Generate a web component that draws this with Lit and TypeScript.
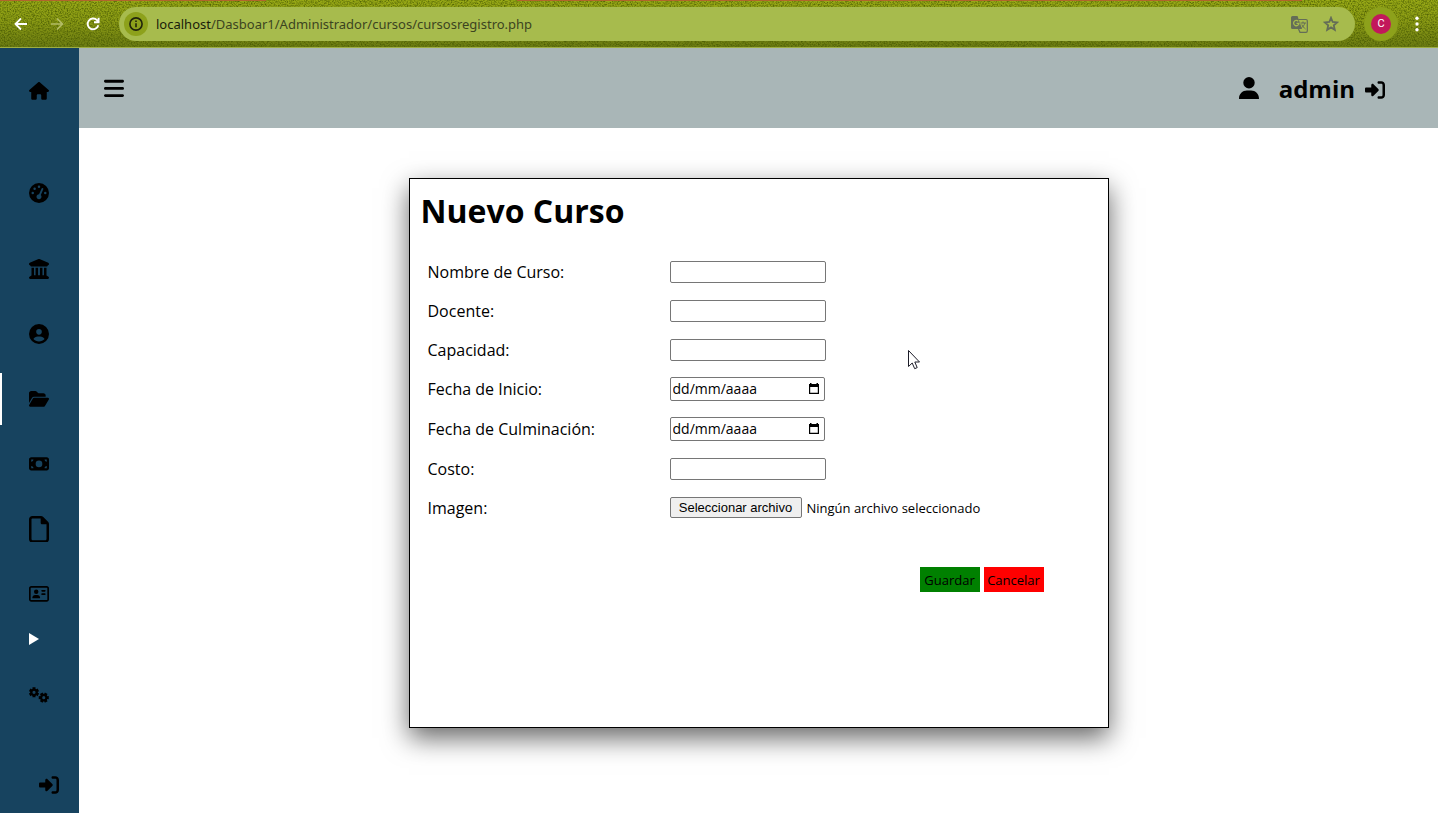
import { LitElement, html, svg, css } from "lit";
import { customElement, property, state, query } from "lit/decorators.js";
import { classMap } from "lit/directives/class-map.js";

interface Glyph {
  w: number;
  h: number;
  d: string;
}

// One cog: six teeth around a ring with a hole in the middle.
function cog(cx: number, cy: number, turn: number): string {
  const point = (r: number, deg: number) => {
    const a = ((deg + turn) * Math.PI) / 180;
    return `${(cx + r * Math.cos(a)).toFixed(1)} ${(cy + r * Math.sin(a)).toFixed(1)}`;
  };
  let d = "";
  for (let i = 0; i < 6; i++) {
    const a = i * 60;
    d += `${i ? "L" : "M"}${point(124, a - 22)}L${point(168, a - 17)}L${point(168, a + 17)}L${point(124, a + 22)}`;
  }
  return `${d}ZM${cx - 50} ${cy}a50 50 0 1 0 100 0a50 50 0 1 0 -100 0Z`;
}

const GLYPHS: Record<string, Glyph> = {
  home: { w: 576, h: 512, d: "M575.8 255.5c0 18-15 32.1-32 32.1h-32l.7 160.2c0 2.7-.2 5.4-.5 8.1V472c0 22.1-17.9 40-40 40H456c-1.1 0-2.2 0-3.3-.1c-1.4 .1-2.8 .1-4.2 .1H416 392c-22.1 0-40-17.9-40-40V448 384c0-17.7-14.3-32-32-32H256c-17.7 0-32 14.3-32 32v64 24c0 22.1-17.9 40-40 40H160 128.1c-1.5 0-3-.1-4.5-.2c-1.2 .1-2.4 .2-3.6 .2H104c-22.1 0-40-17.9-40-40V360c0-.9 0-1.9 .1-2.8V287.6H32c-18 0-32-14-32-32.1c0-9 3-17 10-24L266.4 8c7-7 15-8 22-8s15 2 21 7L564.8 231.5c8 7 12 15 11 24z" },
  gauge: { w: 512, h: 512, d: "M0 256a256 256 0 1 1 512 0A256 256 0 1 1 0 256zM288 96a32 32 0 1 0 -64 0 32 32 0 1 0 64 0zM256 416c35.3 0 64-28.7 64-64c0-17.4-6.9-33.1-18.1-44.6L366 161.7c5.3-12.1-.2-26.3-12.3-31.6s-26.3 .2-31.6 12.3L257.9 288c-.6 0-1.3 0-1.9 0c-35.3 0-64 28.7-64 64s28.7 64 64 64zM176 144a32 32 0 1 0 -64 0 32 32 0 1 0 64 0zM96 288a32 32 0 1 0 0-64 32 32 0 1 0 0 64zm352-32a32 32 0 1 0 -64 0 32 32 0 1 0 64 0z" },
  columns: { w: 512, h: 512, d: "M243.4 2.6l-224 96c-14 6-21.8 21-18.7 35.8S16.8 160 32 160v8c0 13.3 10.7 24 24 24H456c13.3 0 24-10.7 24-24v-8c15.2 0 28.3-10.7 31.3-25.6s-4.8-29.9-18.7-35.8l-224-96c-8-3.4-17.2-3.4-25.2 0zM128 224H64V420.3c-.6 .3-1.2 .7-1.8 1.1l-48 32c-11.7 7.8-17 22.4-12.9 35.9S17.9 512 32 512H480c14.1 0 26.5-9.2 30.6-22.7s-1.1-28.1-12.9-35.9l-48-32c-.6-.4-1.2-.7-1.8-1.1V224H384V416H344V224H280V416H232V224H168V416H128V224z" },
  userCircle: { w: 512, h: 512, d: "M399 384.2C376.9 345.8 335.4 320 288 320H224c-47.4 0-88.9 25.8-111 64.2c35.2 39.2 86.2 63.8 143 63.8s107.8-24.7 143-63.8zM0 256a256 256 0 1 1 512 0A256 256 0 1 1 0 256zm256 16a72 72 0 1 0 0-144 72 72 0 1 0 0 144z" },
  folder: { w: 576, h: 512, d: "M88.7 223.8L0 375.8V96C0 60.7 28.7 32 64 32H181.5c17 0 33.3 6.7 45.3 18.7l26.5 26.5c12 12 28.3 18.7 45.3 18.7H416c35.3 0 64 28.7 64 64v32H144c-22.8 0-43.8 12.1-55.3 31.8zm27.6 16.1C122.1 230 132.6 224 144 224H544c11.5 0 22 6.1 27.7 16.1s5.7 22.2-.1 32.1l-112 192C453.9 474 443.4 480 432 480H32c-11.5 0-22-6.1-27.7-16.1s-5.7-22.2 .1-32.1l112-192z" },
  money: { w: 576, h: 512, d: "M64 64C28.7 64 0 92.7 0 128V384c0 35.3 28.7 64 64 64H512c35.3 0 64-28.7 64-64V128c0-35.3-28.7-64-64-64H64zm64 320H64V320c35.3 0 64 28.7 64 64zM64 192V128h64c0 35.3-28.7 64-64 64zM448 384c0-35.3 28.7-64 64-64v64H448zm64-192c-35.3 0-64-28.7-64-64h64v64zM288 160a96 96 0 1 1 0 192 96 96 0 1 1 0-192z" },
  file: { w: 384, h: 512, d: "M320 464c8.8 0 16-7.2 16-16V160H256c-17.7 0-32-14.3-32-32V48H64c-8.8 0-16 7.2-16 16V448c0 8.8 7.2 16 16 16H320zM0 64C0 28.7 28.7 0 64 0H229.5c17 0 33.3 6.7 45.3 18.7l90.5 90.5c12 12 18.7 28.3 18.7 45.3V448c0 35.3-28.7 64-64 64H64c-35.3 0-64-28.7-64-64V64z" },
  card: { w: 576, h: 512, d: "M512 80c8.8 0 16 7.2 16 16V416c0 8.8-7.2 16-16 16H64c-8.8 0-16-7.2-16-16V96c0-8.8 7.2-16 16-16H512zM64 32C28.7 32 0 60.7 0 96V416c0 35.3 28.7 64 64 64H512c35.3 0 64-28.7 64-64V96c0-35.3-28.7-64-64-64H64zM208 256a64 64 0 1 0 0-128 64 64 0 1 0 0 128zm-32 32c-44.2 0-80 35.8-80 80c0 8.8 7.2 16 16 16H304c8.8 0 16-7.2 16-16c0-44.2-35.8-80-80-80H176zM376 144c-13.3 0-24 10.7-24 24s10.7 24 24 24h80c13.3 0 24-10.7 24-24s-10.7-24-24-24H376zm0 96c-13.3 0-24 10.7-24 24s10.7 24 24 24h80c13.3 0 24-10.7 24-24s-10.7-24-24-24H376z" },
  gears: { w: 640, h: 512, d: cog(160, 170, 30) + cog(472, 340, 0) },
  exit: { w: 512, h: 512, d: "M217.9 105.9L340.7 228.7c7.2 7.2 11.3 17.1 11.3 27.3s-4.1 20.1-11.3 27.3L217.9 406.1c-6.4 6.4-15 9.9-24 9.9c-18.7 0-33.9-15.2-33.9-33.9l0-62.1L32 320c-17.7 0-32-14.3-32-32l0-64c0-17.7 14.3-32 32-32l128 0 0-62.1c0-18.7 15.2-33.9 33.9-33.9c9 0 17.6 3.6 24 9.9zM352 416l64 0c17.7 0 32-14.3 32-32l0-256c0-17.7-14.3-32-32-32l-64 0c-17.7 0-32-14.3-32-32s14.3-32 32-32l64 0c53 0 96 43 96 96l0 256c0 53-43 96-96 96l-64 0c-17.7 0-32-14.3-32-32s14.3-32 32-32z" },
  user: { w: 448, h: 512, d: "M224 256A128 128 0 1 0 224 0a128 128 0 1 0 0 256zm-45.7 48C79.8 304 0 383.8 0 482.3C0 498.7 13.3 512 29.7 512H418.3c16.4 0 29.7-13.3 29.7-29.7C448 383.8 368.2 304 269.7 304H178.3z" },
  bars: { w: 448, h: 512, d: "M0 96C0 78.300 14.300 64 32 64H416c17.700 0 32 14.300 32 32s-14.300 32-32 32H32C14.300 128 0 113.700 0 96zM0 256c0-17.700 14.300-32 32-32H416c17.700 0 32 14.300 32 32s-14.300 32-32 32H32c-17.700 0-32-14.300-32-32zM448 416c0 17.700-14.300 32-32 32H32c-17.700 0-32-14.300-32-32s14.300-32 32-32H416c17.700 0 32 14.300 32 32z" },
};

@customElement("ui-glyph")
class UiGlyph extends LitElement {
  static styles = css`
    :host { display: block; width: 20px; }
    .glyph { display: block; width: 100%; height: auto; fill: currentColor; fill-rule: evenodd; }
  `;
  @property() name = "home";
  render() {
    const g = GLYPHS[this.name];
    return html`<svg class="glyph" viewBox="0 0 ${g.w} ${g.h}" aria-hidden="true">${svg`<path d=${g.d}></path>`}</svg>`;
  }
}

@customElement("browser-bar")
class BrowserBar extends LitElement {
  static styles = css`
    :host {
      display: block;
      position: relative;
      background: linear-gradient(#98a916, #8a9a14 45%, #6c7c12);
      border-bottom: 1px solid #9dae42;
    }
    .grain { position: absolute; inset: 0; width: 100%; height: 100%; pointer-events: none; }
    .bar { position: relative; display: flex; align-items: center; height: 47px; box-sizing: border-box; padding: 1px 12px 0 3px; }
    .tool { display: grid; place-items: center; width: 36px; height: 36px; padding: 0; border: 0; background: none; color: #fff; }
    .tool.dim { color: #b3bc66; }
    .tool svg { display: block; }
    .address {
      flex: 1;
      display: flex;
      align-items: center;
      height: 34px;
      margin: 0 9px 0 8px;
      padding: 0 8px 0 5px;
      border-radius: 17px;
      background: #a7bb4d;
      color: #5a6238;
    }
    .site { display: grid; place-items: center; width: 24px; height: 24px; padding: 0; border: 0; border-radius: 50%; background: #8da11b; color: #20240c; }
    .url { flex: 1; padding-left: 8px; font: 13px/20px "Noto Sans", "Open Sans", sans-serif; color: #3c441f; }
    .host { color: #191c0a; }
    .mini { display: grid; place-items: center; width: 32px; height: 32px; padding: 0; border: 0; background: none; color: #646d57; }
    .profile { display: grid; place-items: center; width: 34px; height: 34px; padding: 0; border: 0; border-radius: 50%; background: #8da11b; }
    .avatar { width: 20px; border-radius: 50%; background: #c2185b; color: #fff; font: 11px/20px Roboto, sans-serif; }
    .menu { width: 28px; margin: 0 -5px 0 5px; }
  `;
  render() {
    return html`
      <svg class="grain" aria-hidden="true">
        <filter id="leaf" x="0" y="0" width="100%" height="100%" color-interpolation-filters="sRGB">
          <feTurbulence type="fractalNoise" baseFrequency="0.7" numOctaves="2" seed="7"></feTurbulence>
          <feColorMatrix values="0 0 0 0 0.25  0 0 0 0 0.32  0 0 0 0 0  1.800 0 0 0 -0.700"></feColorMatrix>
        </filter>
        <rect width="100%" height="100%" filter="url(#leaf)"></rect>
        <path d="M0 .5H266M517 .5H1302" stroke="#b0652c"></path>
      </svg>
      <div class="bar">
        <button class="tool" aria-label="Atrás">
          <svg width="14" height="14" viewBox="0 0 14 14" fill="none" stroke="currentColor" stroke-width="1.800"><path d="M13 7H2M7 1.500 1.500 7 7 12.500"></path></svg>
        </button>
        <button class="tool dim" aria-label="Adelante">
          <svg width="14" height="14" viewBox="0 0 14 14" fill="none" stroke="currentColor" stroke-width="1.600"><path d="M1 7h11M7 1.500 12.500 7 7 12.500"></path></svg>
        </button>
        <button class="tool" aria-label="Recargar">
          <svg width="14" height="14" viewBox="0 0 14 14" fill="none" stroke="currentColor" stroke-width="1.900"><path d="M12.300 8.200A5.400 5.400 0 1 1 11 3.200L12.500 5M12.600.8V5.300H8"></path></svg>
        </button>
        <div class="address">
          <button class="site" aria-label="Información del sitio">
            <svg width="14" height="14" viewBox="0 0 14 14" fill="none" stroke="currentColor" stroke-width="1.600"><circle cx="7" cy="7" r="6.100"></circle><path d="M7 6.300v4M7 3.600v1.500"></path></svg>
          </button>
          <div class="url"><span class="host">localhost</span>/Dasboar1/Administrador/cursos/cursosregistro.php</div>
          <button class="mini" aria-label="Traducir">
            <svg width="17" height="17" viewBox="0 0 17 17" fill="none" stroke="currentColor">
              <path d="M1.500 0H6.500L11 13H1.500A1.500 1.500 0 0 1 0 11.500V1.500A1.500 1.500 0 0 1 1.500 0Z" fill="currentColor" stroke="none"></path>
              <path d="M7.500 3.500H15a1.300 1.300 0 0 1 1.300 1.300V15a1.300 1.300 0 0 1-1.300 1.300H9L7.500 13" stroke-width="1.200"></path>
              <path d="M9.500 7h5.500M12 5.500V7M13.800 7c-.3 2-2 4-3.500 5M10.800 8.500c.8 2 2.400 3.500 3.700 4.500"></path>
              <path d="M7.300 5.200A2.700 2.700 0 1 0 8 7.300H5.500" stroke="#a7bb4d" stroke-width="1.300"></path>
            </svg>
          </button>
          <button class="mini" aria-label="Añadir a marcadores">
            <svg width="16" height="16" viewBox="0 0 16 16" fill="none" stroke="currentColor" stroke-width="1.800"><path d="M8 1.800 9.700 6l4.500.4-3.400 3 1 4.400L8 11.400l-3.800 2.400 1-4.400-3.400-3L6.300 6Z"></path></svg>
          </button>
        </div>
        <button class="profile" aria-label="Perfil"><span class="avatar">C</span></button>
        <button class="tool menu" aria-label="Menú">
          <svg width="4" height="16" viewBox="0 0 4 16" fill="currentColor"><circle cx="2" cy="2.200" r="1.700"></circle><circle cx="2" cy="8" r="1.700"></circle><circle cx="2" cy="13.800" r="1.700"></circle></svg>
        </button>
      </div>
    `;
  }
}

const LINKS = [
  { name: "gauge", label: "Panel", first: true },
  { name: "columns", label: "Institución" },
  { name: "userCircle", label: "Usuarios" },
  { name: "folder", label: "Cursos", active: true },
  { name: "money", label: "Pagos" },
  { name: "file", label: "Reportes" },
  { name: "card", label: "Docentes" },
];

@customElement("side-nav")
class SideNav extends LitElement {
  static styles = css`
    :host { display: flex; flex-direction: column; width: 79px; flex: none; background: #17435f; color: #000; }
    .list { display: flex; flex-direction: column; gap: 13px; }
    .link { display: flex; align-items: center; height: 52px; box-sizing: border-box; padding-left: 29px; color: inherit; border: 0 solid #fff; }
    .home { height: 86px; margin-bottom: 33px; }
    .first { margin-bottom: 11px; }
    .active { border-left-width: 2px; padding-left: 27px; }
    .more { display: flex; align-items: center; height: 38px; padding: 0 0 0 29px; border: 0; background: none; color: #fff; }
    .settings { margin-top: 11px; }
    .out { margin-top: auto; margin-bottom: 2px; padding-left: 39px; }
  `;
  render() {
    return html`
      <a class="link home" href="#inicio" aria-label="Inicio"><ui-glyph name="home"></ui-glyph></a>
      <nav class="list">
        ${LINKS.map(
          (l) => html`<a class=${classMap({ link: true, first: !!l.first, active: !!l.active })} href="#${l.name}" aria-label=${l.label}>
            <ui-glyph name=${l.name}></ui-glyph>
          </a>`,
        )}
      </nav>
      <button class="more" aria-label="Más opciones" aria-expanded="false">
        <svg width="10" height="12" viewBox="0 0 10 12" fill="currentColor"><path d="M0 0 10 6 0 12Z"></path></svg>
      </button>
      <a class="link settings" href="#configuracion" aria-label="Configuración"><ui-glyph name="gears"></ui-glyph></a>
      <a class="link out" href="#salir" aria-label="Salir"><ui-glyph name="exit"></ui-glyph></a>
    `;
  }
}

@customElement("course-form")
class CourseForm extends LitElement {
  static styles = css`
    :host {
      display: block;
      box-sizing: border-box;
      width: 700px;
      max-width: 100%;
      min-height: 550px;
      border: 1px solid #000;
      background: #fff;
      box-shadow: 0 10px 25px rgba(0, 0, 0, 0.6);
      font: 16px/22px "Open Sans", sans-serif;
      color: #000;
    }
    .title { margin: 0; padding: 10px 11px 20px; font-size: 32px; line-height: 43px; font-weight: 700; }
    .row { display: grid; grid-template-columns: 242px 1fr; align-items: center; height: 39px; padding-left: 18px; }
    .row.date { height: 40px; }
    .box, .picker { box-sizing: border-box; width: 156px; height: 22px; border: 1px solid #767676; border-radius: 2px; background: #fff; }
    .box { padding: 1px 2px; font: inherit; font-size: 13px; }
    .picker { display: flex; align-items: center; width: 155px; height: 24px; padding: 0 4px 0 2px; }
    .day { flex: 1; min-width: 0; padding: 0; border: 0; outline: 0; background: none; font: 14px/20px "Open Sans", sans-serif; color: #000; }
    .day::placeholder { color: #000; opacity: 1; }
    .calendar { padding: 0; border: 0; background: none; color: #000; }
    .calendar svg { display: block; }
    .upload { display: flex; align-items: center; gap: 5px; font-size: 13px; }
    .choose { box-sizing: border-box; width: 132px; height: 21px; padding: 0; border: 1px solid #767676; border-radius: 2px; background: #efefef; color: #000; font: 13px/18px "Liberation Sans", Arial, sans-serif; }
    .actions { display: flex; justify-content: flex-end; gap: 4px; padding: 40px 64px 0 0; }
    .action { width: 60px; height: 25px; padding: 0; border: 0; font: 13px/18px "Open Sans", sans-serif; color: #000; }
    .save { background: #008000; }
    .cancel { background: #f00; }
  `;
  @state() private fileName = "Ningún archivo seleccionado";
  @query("#imagen") private file!: HTMLInputElement;

  private text(id: string, label: string) {
    return html`<div class="row"><label for=${id}>${label}</label><input class="box" id=${id} name=${id} type="text" /></div>`;
  }
  private date(id: string, label: string) {
    return html`<div class="row date">
      <label for=${id}>${label}</label>
      <div class="picker">
        <input class="day" id=${id} name=${id} type="text" inputmode="numeric" placeholder="dd/mm/aaaa" />
        <button class="calendar" type="button" aria-label="Abrir calendario">
          <svg width="12" height="14" viewBox="0 0 12 14"><path d="M2 1h1.500v1h5V1H10v1h1v10H1V2h1Zm.2 4v5.800h7.600V5Z" fill="currentColor" fill-rule="evenodd"></path></svg>
        </button>
      </div>
    </div>`;
  }
  private picked() {
    this.fileName = this.file.files?.[0]?.name ?? "Ningún archivo seleccionado";
  }
  render() {
    return html`
      <form @submit=${(e: Event) => e.preventDefault()}>
        <h1 class="title">Nuevo Curso</h1>
        ${this.text("nombre", "Nombre de Curso:")} ${this.text("docente", "Docente:")} ${this.text("capacidad", "Capacidad:")}
        ${this.date("inicio", "Fecha de Inicio:")} ${this.date("fin", "Fecha de Culminación:")} ${this.text("costo", "Costo:")}
        <div class="row">
          <label for="imagen">Imagen:</label>
          <div class="upload">
            <input id="imagen" name="imagen" type="file" hidden @change=${this.picked} />
            <button class="choose" type="button" @click=${() => this.file.click()}>Seleccionar archivo</button>
            <span>${this.fileName}</span>
          </div>
        </div>
        <div class="actions">
          <button class="action save" type="submit">Guardar</button>
          <button class="action cancel" type="reset">Cancelar</button>
        </div>
      </form>
    `;
  }
}

@customElement("app-root")
class AppRoot extends LitElement {
  static styles = css`
    :host { display: flex; flex-direction: column; min-height: 100vh; position: relative; background: #fff; font-family: "Open Sans", sans-serif; color: #000; }
    .shell { flex: 1; display: flex; }
    .content { flex: 1; min-width: 0; }
    .top { display: flex; align-items: center; justify-content: space-between; height: 80px; padding: 0 53px 0 25px; background: #a9b6b7; }
    .toggle { padding: 0; border: 0; background: none; color: inherit; }
    .account { display: flex; align-items: center; font-size: 24px; line-height: 33px; font-weight: 700; }
    .name { margin: 0 10px 0 20px; }
    .leave { padding-top: 4px; color: inherit; }
    .main { display: flex; justify-content: center; padding: 50px 20px; }
    .pointer { position: absolute; left: 908px; top: 350px; pointer-events: none; }
  `;
  render() {
    return html`
      <browser-bar></browser-bar>
      <div class="shell">
        <side-nav></side-nav>
        <div class="content">
          <header class="top">
            <button class="toggle" aria-label="Mostrar menú"><ui-glyph name="bars"></ui-glyph></button>
            <div class="account">
              <ui-glyph name="user"></ui-glyph>
              <span class="name">admin</span>
              <a class="leave" href="#salir" aria-label="Salir"><ui-glyph name="exit"></ui-glyph></a>
            </div>
          </header>
          <main class="main"><course-form></course-form></main>
        </div>
      </div>
      <svg class="pointer" width="13" height="20" viewBox="0 0 13 20" aria-hidden="true">
        <path d="M.5 .5V16.500L4.200 13 6.700 18.700 9.200 17.600 6.800 12H11.500Z" fill="#fff" stroke="#1c1c28"></path>
      </svg>
    `;
  }
}
